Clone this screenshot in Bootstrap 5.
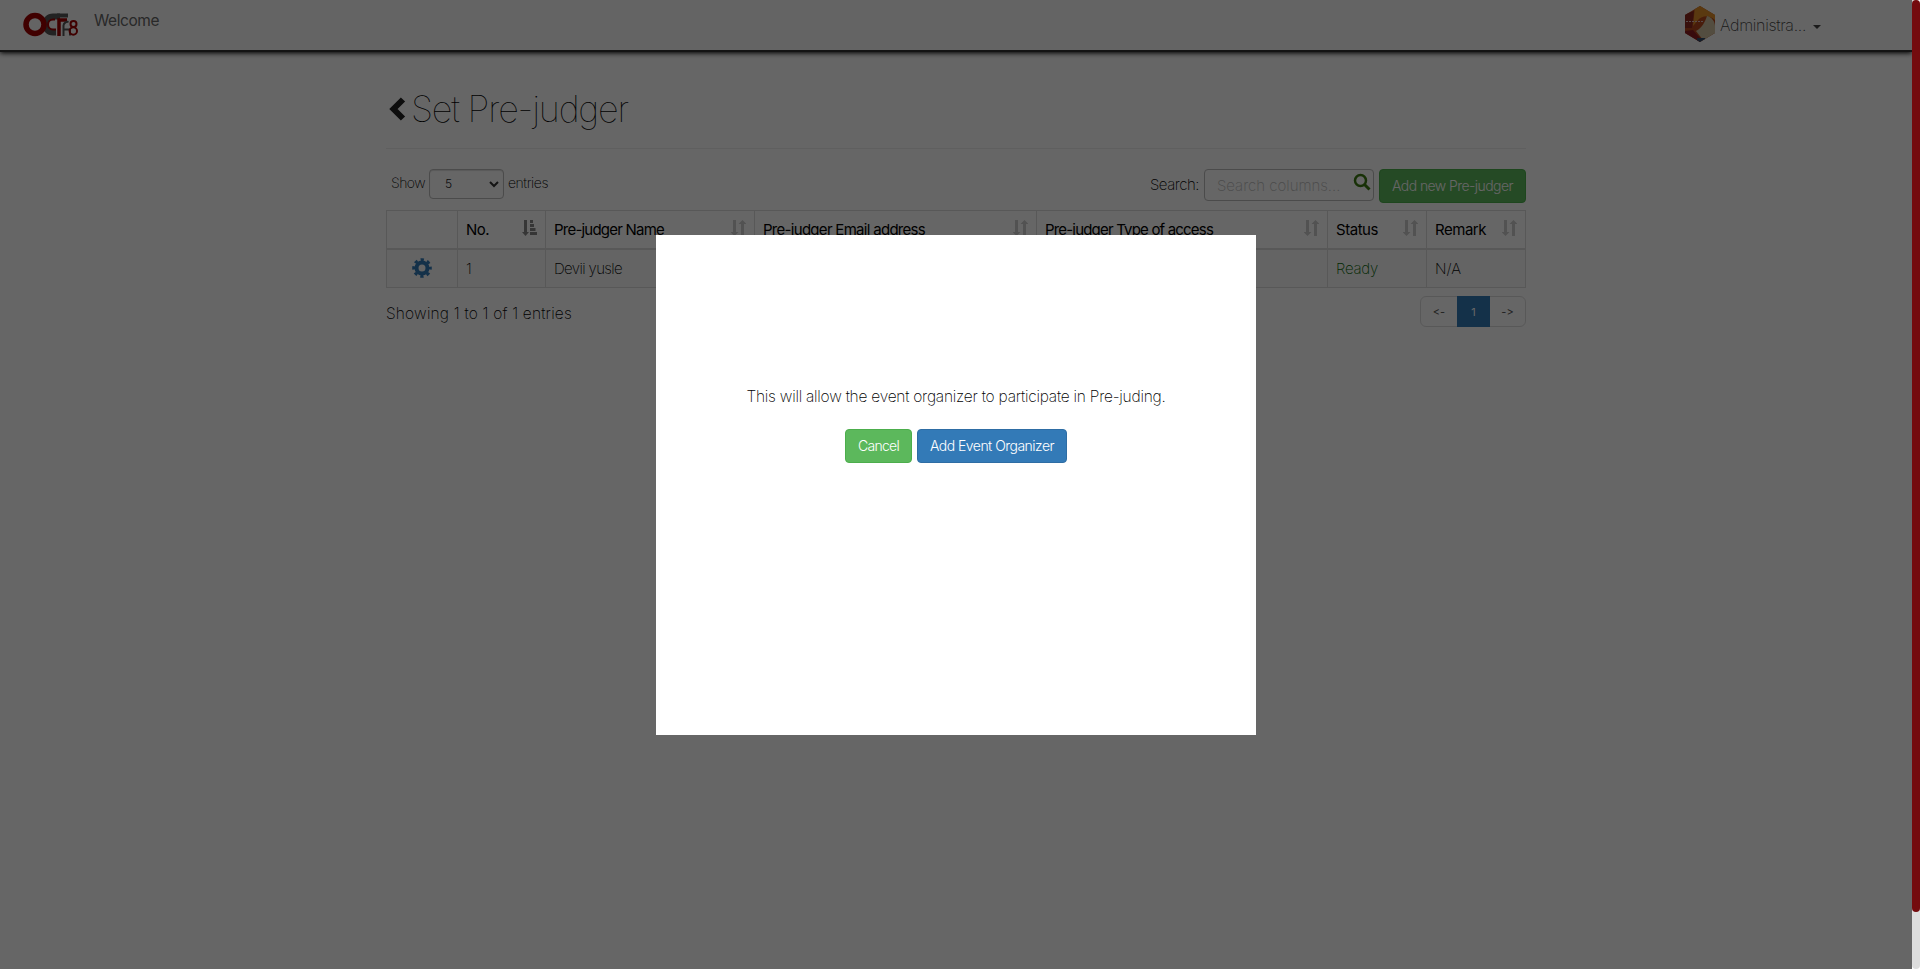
<!DOCTYPE html>
<html lang="en">
<head>
<meta charset="utf-8">
<title>Set Pre-judger</title>
<link rel="stylesheet" href="https://cdn.jsdelivr.net/npm/bootstrap@5.3.0/dist/css/bootstrap.min.css">
<style>
html,body{height:100%;overflow:hidden}
body{font:200 15.5px/20px Inter,"Liberation Sans",sans-serif;font-feature-settings:"calt" 0;color:#000;background:#fff}
.view{width:1912px}
.topbar{height:52px;border-bottom:2px solid #333;box-shadow:0 1px 5px #000;background:#fafafa}
.topbar .welcome{font-size:15.5px;font-weight:400;color:#666;margin:11px 0 0 15px}
.topbar .account{margin:6px 91px 0 0;color:#444;font-size:16px}
.caretdown{border:4px solid transparent;border-top-color:#444;border-bottom:0}
.page-area{width:1140px;margin:0 auto;padding-top:31px}
h1{font-size:36px;font-weight:100;line-height:52px;height:66px;border-bottom:1px solid #eee;padding-left:3px}
.tools{height:61px;padding-top:20px;font-size:14px}
.tools .form-select{width:75px;height:30px;padding:0 0 0 15px;font-size:12px;font-weight:300;border:1px solid #bbb;border-radius:4px;background:none;box-shadow:inset 0 1px 1px #ddd}
.tools .form-control{width:170px;height:32px;font:inherit;font-size:15px;padding:6px 12px;border:1px solid #bbb;border-radius:4px}
.form-control::placeholder{color:#bbb;opacity:1}
.act{height:34px;padding:0 12px;font-size:14px;line-height:32px;font-weight:300;border-radius:4px;color:#fff;white-space:nowrap}
.green{background:#5cb85c;border-color:#4cae4c}.blue{background:#337ab7;border-color:#2e6da4}
.judges{table-layout:fixed;width:1140px;margin:0;font-size:15px;border-color:#ddd;--bs-table-bg:transparent}
.judges th,.judges td{border:1px solid #ddd;padding:8px;line-height:21px;white-space:nowrap;color:#000}
.judges th{border-bottom-width:2px;font-weight:400}
.judges tbody td{background:#f9f9f9}
.judges td svg{display:block;margin:0 auto}
.sorting{float:right;margin:1px 0 0;fill:#ccc}
.pager .page-link{height:31px;font-size:11px;font-weight:400;line-height:31px;padding:0;text-align:center;border:1px solid #ddd;color:#555}
.pager .active .page-link{background:#337ab7;border-color:#337ab7;color:#fff}
.shade{position:fixed;z-index:10;inset:0 8px 0 0;padding-top:235px;background:rgba(0,0,0,.6)}
.dialogbox{width:600px;height:500px;background:#fff;padding-top:152px}
.track{position:fixed;right:0;top:0;bottom:0;width:8px;background:#ddd;border-radius:5px}
.thumb{height:912px;background:#740b0e;border-radius:5px}
.f{display:inline-block;white-space:nowrap}
</style>
</head>
<body>
<div class="view">
<nav class="topbar d-flex">
<svg width="56" height="26" viewBox="0 0 56 26" style="margin:11px 0 0 23px" fill="none"><path d="M37 5.500H30a8 8 0 0 0 0 16h3" stroke="#555" stroke-width="6"/><path d="M32 8.500h-2a5 5 0 0 0 0 10h3" stroke="#a00000" stroke-width="2"/><circle cx="12" cy="13.500" r="9" stroke="#a00000" stroke-width="5.500"/><path d="M34 4.500h11" stroke="#555" stroke-width="4"/><path d="M36 25V9h8" stroke="#a00000" stroke-width="3.500"/><path d="M40.500 25V14.500a4 4 0 0 1 5-3.500M40 18.500h7v6" stroke="#555" stroke-width="2"/><circle cx="50.500" cy="13" r="3" stroke="#a00000" stroke-width="2"/><circle cx="50.300" cy="20" r="3.700" stroke="#a00000" stroke-width="2"/></svg>
<div class="welcome"><span class="f" data-w="65">Welcome</span></div>
<div class="account d-flex align-items-start ms-auto">
<svg width="30" height="36" viewBox="0 0 30 36"><defs><clipPath id="hex"><path d="M15 0 30 9v18L15 36 0 27V9z"/></clipPath></defs><g clip-path="url(#hex)"><path fill="#b5481c" d="M0 0h30v36H0z"/><path fill="#e0902a" d="M10 0h20v14C24 9 18 9 13 14L8 20z"/><path fill="#8c2a20" d="M0 8 9 5 7 22H0z"/><path fill="#cfc0a0" d="M22 10c5 1 8 6 8 10v10l-12 4-7-9c6-3 9-9 11-15z"/><path fill="#8c1d22" d="m0 25 8-1 7 8v4H0z"/><path fill="#334a66" d="M12 32h8v4h-8z"/><path stroke="#dbb" d="M1 15.500h17" stroke-dasharray="2 1"/></g></svg>
<span class="f" style="margin:9px 0 0 5px" data-w="86">Administra...</span><span class="caretdown" style="margin:19px 0 0 7px"></span></div>
</nav>
<main class="page-area">
<h1 class="d-flex m-0"><svg width="17" height="24" viewBox="0 0 17 24" style="margin:14px 5px 0 0"><path d="M14 2.500 4.500 12l9.500 9.500" fill="none" stroke="#222" stroke-width="6"/></svg><span class="f" data-w="217">Set Pre-judger</span></h1>
<div class="tools d-flex align-items-start">
<span class="f" style="margin:4px 4px 0 5px" data-w="34">Show</span>
<div class="form-select d-flex align-items-center"><span>5</span><svg class="ms-auto me-1" width="10" height="8" fill="none" stroke="#333" stroke-width="2"><path d="m1 2 4 4 4-4"/></svg></div>
<span class="f" style="margin:4px 0 0 4px" data-w="40">entries</span>
<span class="f ms-auto" style="margin:6px 5px 0 0;font-size:15px" data-w="49">Search:</span>
<div class="position-relative" style="margin-right:5px"><input class="form-control" placeholder="Search columns..."><svg class="position-absolute" style="right:3px;top:4px" width="18" height="18" fill="none" stroke="#3c7b12" stroke-width="2.500"><circle cx="7.500" cy="7.500" r="5.500"/><path d="m11.500 11.500 5 5" stroke-width="3"/></svg></div>
<button class="btn act green"><span class="f" data-w="121">Add new Pre-judger</span></button>
</div>
<svg class="d-none"><symbol id="both" viewBox="0 0 15 16"><path d="M2 0h3v12h2.500L3.500 16-.5 12H2zM10 16V4H7.500l4-4 4 4H13v12z"/></symbol><symbol id="asc" viewBox="0 0 15 16"><path d="M2 0h3v12h2L3.500 16 0 12h2zM8 0h3v3H8zM8 4h4v3H8zM8 8h5.500v3H8zM8 12h7v3H8z"/></symbol></svg>
<table class="table judges">
<colgroup><col style="width:71px"><col style="width:88px"><col style="width:209px"><col style="width:282px"><col style="width:291px"><col style="width:99px"><col style="width:99px"></colgroup>
<thead><tr><th></th><th><svg class="sorting" width="15" height="16" style="fill:#888"><use href="#asc"/></svg><span class="f" data-w="23">No.</span></th><th><svg class="sorting" width="15" height="16"><use href="#both"/></svg><span class="f" data-w="110">Pre-judger Name</span></th><th><svg class="sorting" width="15" height="16"><use href="#both"/></svg><span class="f" data-w="162">Pre-judger Email address</span></th><th><svg class="sorting" width="15" height="16"><use href="#both"/></svg><span class="f" data-w="168">Pre-judger Type of access</span></th><th><svg class="sorting" width="15" height="16"><use href="#both"/></svg><span class="f" data-w="42">Status</span></th><th><svg class="sorting" width="15" height="16"><use href="#both"/></svg><span class="f" data-w="51">Remark</span></th></tr></thead>
<tbody><tr><td><svg width="20" height="20" viewBox="-10 -10 20 20" fill="none" stroke="#337ab7"><circle r="5.500" stroke-width="4"/><circle r="8.300" stroke-width="3" stroke-dasharray="3.260" stroke-dashoffset="1.630"/></svg></td><td>1</td><td><span class="f" data-w="68">Devii yusle</span></td><td></td><td></td><td style="color:#006400"><span class="f" data-w="42">Ready</span></td><td>N/A</td></tr></tbody>
</table>
<div class="d-flex"><span class="f" style="margin-top:16px" data-w="186">Showing 1 to 1 of 1 entries</span>
<ul class="pagination pager ms-auto mt-2 mb-0"><li class="page-item"><a class="page-link" style="width:38px">&lt;-</a></li><li class="page-item active"><a class="page-link" style="width:33px">1</a></li><li class="page-item"><a class="page-link" style="width:37px">-&gt;</a></li></ul></div>
</main>
</div>
<div class="shade d-flex align-items-start justify-content-center">
<div class="dialogbox text-center"><p style="margin:0 0 22px"><span class="f" data-w="419">This will allow the event organizer to participate in Pre-juding.</span></p>
<div class="d-flex justify-content-center" style="gap:5px"><button class="btn act green"><span class="f" data-w="41">Cancel</span></button><button class="btn act blue"><span class="f" data-w="124">Add Event Organizer</span></button></div></div>
</div>
<div class="track"><div class="thumb"></div></div>
<script src="https://cdn.jsdelivr.net/npm/bootstrap@5.3.0/dist/js/bootstrap.bundle.min.js"></script>
<script>
document.fonts.ready.then(()=>document.querySelectorAll('[data-w]').forEach(e=>{
  const w=+e.dataset.w, s=(w-e.getBoundingClientRect().width)/e.textContent.length;
  e.style.letterSpacing=s.toFixed(3)+'px';
}));
</script>
</body>
</html>
